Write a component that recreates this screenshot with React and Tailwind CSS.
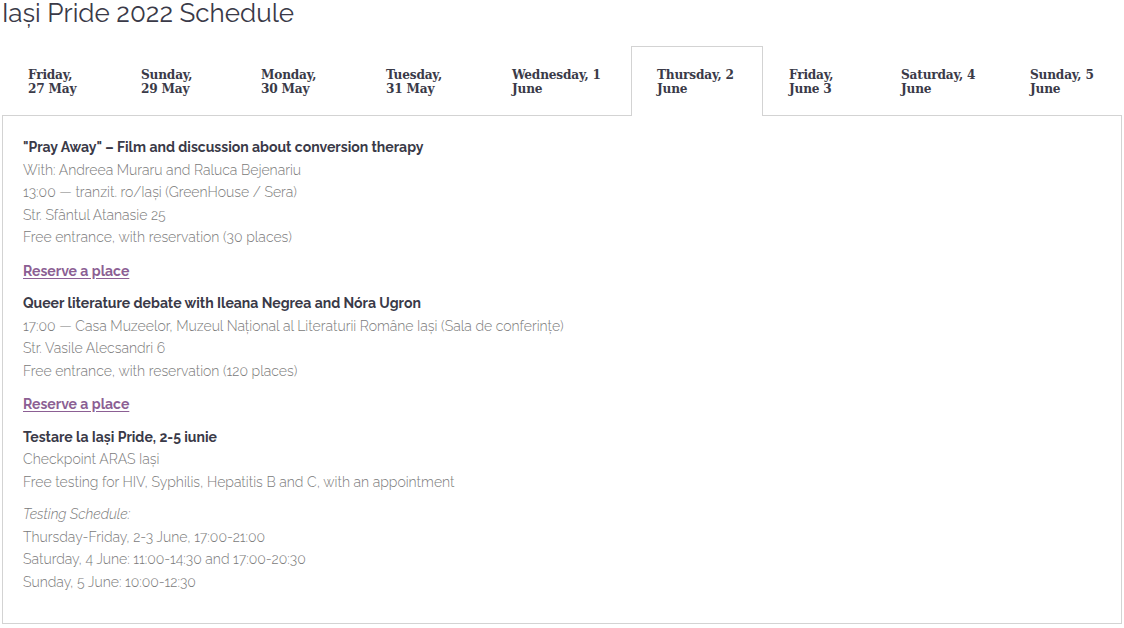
const tabs = [
  { l1: 'Friday,', l2: '27 May', w: 'w-[113px]' },
  { l1: 'Sunday,', l2: '29 May', w: 'w-[120px]' },
  { l1: 'Monday,', l2: '30 May', w: 'w-[125px]' },
  { l1: 'Tuesday,', l2: '31 May', w: 'w-[126px]' },
  { l1: 'Wednesday, 1', l2: 'June', w: 'w-[145px]' },
  { l1: 'Thursday, 2', l2: 'June', w: 'w-[132px]', active: true },
  { l1: 'Friday,', l2: 'June 3', w: 'w-[112px]' },
  { l1: 'Saturday, 4', l2: 'June', w: 'w-[129px]' },
  { l1: 'Sunday, 5', l2: 'June', w: 'w-[117px]' },
];

const sans = "font-['Raleway','Lato','Open_Sans',sans-serif]";

function Line({ children, italic }) {
  return (
    <p className={`text-[14px] leading-[22.5px] font-light text-[#7a7a7a] ${italic ? 'italic' : ''}`}>
      {children}
    </p>
  );
}

function Title({ children }) {
  return <h3 className="text-[14px] leading-[22.5px] font-bold text-[#3a3a48]">{children}</h3>;
}

function Reserve() {
  return (
    <a href="#" className="block mt-[11px] mb-[10px] text-[14px] leading-[22.5px] font-bold text-[#8c5f94] underline underline-offset-2">
      Reserve a place
    </a>
  );
}

export default function App() {
  return (
    <div className={`w-[1124px] h-[628px] bg-white ${sans}`}>
      <h1 className="pl-[2px] text-[26px] leading-[26px] font-normal text-[#3a3a48]">
        Iași Pride 2022 Schedule
      </h1>

      <div className="mt-[20px] flex pl-[2px] pr-[3px]">
        {tabs.map((t, i) => (
          <div
            key={i}
            className={`${t.w} h-[70px] font-['DejaVu_Serif_Condensed','Liberation_Serif',serif] font-bold text-[13.5px] leading-[14px] text-[#3a3a48] tracking-[-0.2px] ${
              t.active
                ? 'border border-b-0 border-[#d3d3d3] bg-white relative z-10 pl-[25px] pt-[20px]'
                : 'pl-[26px] pt-[21px]'
            }`}
          >
            <div>{t.l1}</div>
            <div>{t.l2}</div>
          </div>
        ))}
      </div>

      <div className="mx-[2px] w-[1120px] h-[509px] -mt-px border border-[#d3d3d3] pl-[20px] pt-[20px]">
        <Title>"Pray Away" – Film and discussion about conversion therapy</Title>
        <Line>With: Andreea Muraru and Raluca Bejenariu</Line>
        <Line>13:00 — tranzit. ro/Iași (GreenHouse / Sera)</Line>
        <Line>Str. Sfântul Atanasie 25</Line>
        <Line>Free entrance, with reservation (30 places)</Line>
        <Reserve />

        <Title>Queer literature debate with Ileana Negrea and Nóra Ugron</Title>
        <Line>17:00 — Casa Muzeelor, Muzeul Național al Literaturii Române Iași (Sala de conferințe)</Line>
        <Line>Str. Vasile Alecsandri 6</Line>
        <Line>Free entrance, with reservation (120 places)</Line>
        <Reserve />

        <Title>Testare la Iași Pride, 2-5 iunie</Title>
        <Line>Checkpoint ARAS Iași</Line>
        <Line>Free testing for HIV, Syphilis, Hepatitis B and C, with an appointment</Line>
        <div className="h-[10px]" />
        <Line italic>Testing Schedule:</Line>
        <Line>Thursday-Friday, 2-3 June, 17:00-21:00</Line>
        <Line>Saturday, 4 June: 11:00-14:30 and 17:00-20:30</Line>
        <Line>Sunday, 5 June: 10:00-12:30</Line>
      </div>
    </div>
  );
}
